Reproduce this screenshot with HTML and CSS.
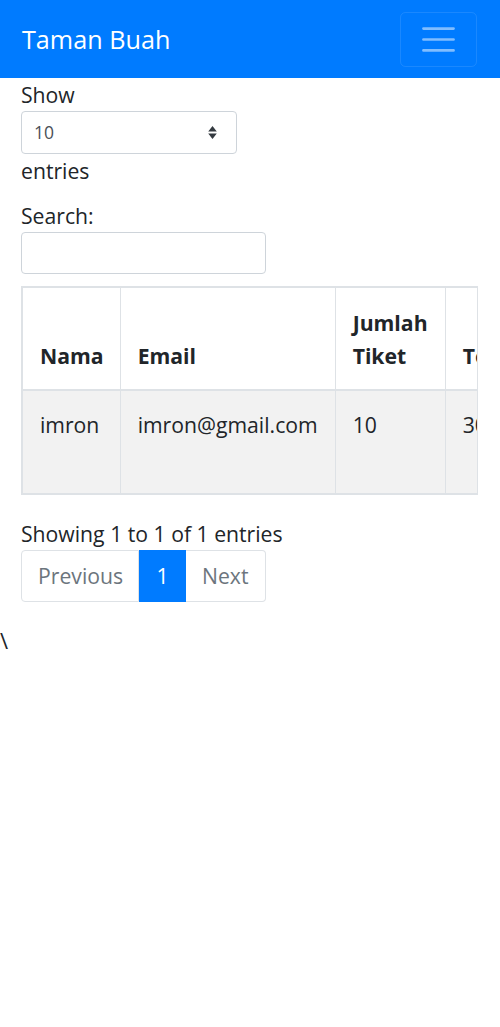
FILE: index.html
```html
<!DOCTYPE html>
<html lang="id">
<head>
<meta charset="utf-8">
<title>Taman Buah</title>
<link rel="stylesheet" href="styles.css">
</head>
<body>
<nav class="navbar">
  <a class="brand" href="#">Taman Buah</a>
  <button class="toggler" type="button" aria-label="Toggle navigation">
    <svg class="toggler-icon" viewBox="0 0 30 30" width="41" height="41"><path d="M4 7h22M4 15h22M4 23h22" stroke="rgba(255,255,255,0.5)" stroke-width="2" stroke-linecap="round" fill="none"/></svg>
  </button>
</nav>
<div class="container">
  <div class="length">
    <label>Show
      <span class="select"><span class="select-value">10</span>
        <svg class="select-arrows" viewBox="0 0 10 14" width="11" height="15"><path d="M5 1 9 6H1zM5 13 1 8h8z" fill="#343a40"/></svg>
      </span>
      entries</label>
  </div>
  <div class="filter">
    <label>Search:
      <span class="input"></span>
    </label>
  </div>
  <div class="table-wrap">
    <table class="table">
      <thead>
        <tr>
          <th class="c1">Nama</th>
          <th class="c2">Email</th>
          <th class="c3">Jumlah Tiket</th>
          <th class="c4">Total Harga</th>
        </tr>
      </thead>
      <tbody>
        <tr>
          <td>imron</td>
          <td>imron@gmail.com</td>
          <td>10</td>
          <td>300000</td>
        </tr>
      </tbody>
    </table>
  </div>
  <div class="info">Showing 1 to 1 of 1 entries</div>
  <ul class="pagination">
    <li class="page disabled">Previous</li>
    <li class="page active">1</li>
    <li class="page disabled">Next</li>
  </ul>
</div>
<div class="stray">\</div>
</body>
</html>
```
FILE: styles.css
```css
* { box-sizing: border-box; }
html, body { margin: 0; padding: 0; }
body {
  font-family: "Open Sans", "Noto Sans", sans-serif;
  font-size: 21.2px;
  line-height: 33px;
  color: #212529;
  background: #fff;
}
.navbar {
  background: #007bff;
  height: 78px;
  padding: 0 22px;
  display: flex;
  align-items: center;
  justify-content: space-between;
}
.brand {
  color: #fff;
  text-decoration: none;
  font-size: 25.2px;
  line-height: 41px;
}
.toggler {
  width: 77px;
  height: 55px;
  margin-right: 1px;
  background: transparent;
  border: 1px solid rgba(255,255,255,0.1);
  border-radius: 5.5px;
  padding: 0;
  display: flex;
  align-items: center;
  justify-content: center;
}
.container { padding: 0 21px; }
.length label, .filter label { display: block; }
.select {
  display: flex;
  align-items: center;
  justify-content: space-between;
  width: 216px;
  height: 43px;
  border: 1px solid #ced4da;
  border-radius: 4px;
  padding: 0 18px 0 12px;
  font-size: 17.5px;
  color: #495057;
}
.filter { margin-top: 12px; }
.input {
  display: block;
  width: 245px;
  height: 42px;
  border: 1px solid #ced4da;
  border-radius: 4px;
}
.table-wrap {
  margin-top: 12px;
  width: 457px;
  overflow: hidden;
  border: 2px solid #dee2e6;
  border-right-width: 1px;
}
.table {
  border-collapse: collapse;
  width: 600px;
}
.table th, .table td {
  border: 1px solid #dee2e6;
  padding: 17px 16px 17px 17px;
  text-align: left;
}
.table thead tr:first-child th { border-top: 0; }
.table tr > :first-child { border-left: 0; }
.table th {
  font-weight: 700;
  vertical-align: bottom;
  height: 102px;
  border-bottom-width: 2px;
}
.table td {
  vertical-align: top;
  height: 103px;
  background: #f2f2f2;
}
.table tbody tr:last-child td { border-bottom: 0; }
.c1 { width: 97px; }
.c2 { width: 215px; }
.c3 { width: 110px; }
.c4 { white-space: nowrap; }
.info { margin-top: 22px; }
.pagination {
  list-style: none;
  margin: 0;
  padding: 0;
  display: flex;
}
.page {
  height: 52px;
  line-height: 50px;
  padding: 0 16px;
  border: 1px solid #dee2e6;
  color: #6c757d;
}
.page:first-child { border-radius: 4px 0 0 4px; width: 118px; }
.page:last-child { border-radius: 0 4px 4px 0; width: 80px; border-left: 0; }
.page.active {
  background: #007bff;
  border-color: #007bff;
  color: #fff;
  width: 47px;
  text-align: center;
}
.stray {
  margin-top: 22px;
  font-size: 22px;
}
```
